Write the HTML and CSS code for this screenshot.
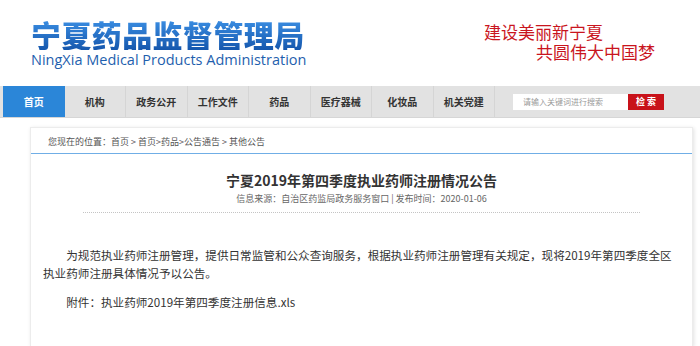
FILE: index.html
```html
<!DOCTYPE html>
<html lang="zh-CN">
<head>
  <meta charset="UTF-8">
  <title>宁夏药品监督管理局</title>
  <link rel="stylesheet" href="styles.css">
</head>
<body>
  <div class="header">
    <div class="logo">
      <div class="logo-cn">宁夏药品监督管理局</div>
      <div class="logo-en">NingXia Medical Products Administration</div>
    </div>
    <div class="slogan">
      <div>建设美丽新宁夏</div>
      <div class="slogan-2">共圆伟大中国梦</div>
    </div>
  </div>

  <div class="nav">
    <a class="nav-item active" href="#">首页</a>
    <a class="nav-item" href="#">机构</a>
    <a class="nav-item" href="#">政务公开</a>
    <a class="nav-item" href="#">工作文件</a>
    <a class="nav-item" href="#">药品</a>
    <a class="nav-item" href="#">医疗器械</a>
    <a class="nav-item" href="#">化妆品</a>
    <a class="nav-item" href="#">机关党建</a>
    <form class="search">
      <input type="text" placeholder="请输入关键词进行搜索">
      <button type="submit">检 索</button>
    </form>
  </div>

  <div class="card">
    <div class="crumb">您现在的位置：首页 &gt; 首页&gt;药品&gt;公告通告 &gt; 其他公告</div>
    <div class="article-head">
      <h1>宁夏2019年第四季度执业药师注册情况公告</h1>
      <div class="meta">信息来源：自治区药监局政务服务窗口&nbsp;|&nbsp;发布时间：2020-01-06</div>
    </div>
    <div class="article-body">
      <p>为规范执业药师注册管理，提供日常监管和公众查询服务，根据执业药师注册管理有关规定，现将2019年第四季度全区执业药师注册具体情况予以公告。</p>
      <p>附件：执业药师2019年第四季度注册信息.xls</p>
    </div>
  </div>
</body>
</html>
```

FILE: styles.css
```css
body { margin: 0; background: #fff; font-family: "Noto Sans CJK SC", sans-serif; color: #333; }

.header { display: flex; justify-content: space-between; height: 86px; padding: 0 45px 0 31px; }
.logo { padding-top: 19px; }
.logo-cn {
  font-size: 30px; font-weight: 900; line-height: 31px; letter-spacing: 0.4px;
  background: linear-gradient(#3b8fe4, #1557ad);
  -webkit-background-clip: text; background-clip: text; color: transparent;
}
.logo-en { margin-top: 1px; font-family: "Open Sans", sans-serif; font-size: 14.5px; line-height: 17px; color: #1f5fae; }
.slogan { padding-top: 22px; font-size: 17px; line-height: 20px; color: #c9151e; }
.slogan-2 { margin-left: 52px; }

.nav { display: flex; align-items: center; height: 32px; padding-left: 3px; background: #e2e2e2; border-bottom: 1px solid #d6d6d6; box-sizing: border-box; }
.nav-item {
  width: 61.5px; height: 100%; box-sizing: border-box; border-right: 1px solid #d5d5d5;
  display: flex; align-items: center; justify-content: center;
  font-size: 10px; font-weight: bold; color: #333; text-decoration: none;
}
.nav-item.active { background: #2b86d8; color: #fff; border-right: none; }
.search { display: flex; margin-left: 18px; }
.search input { width: 115px; height: 16px; box-sizing: border-box; border: none; padding: 0 10px; font-size: 8px; font-family: inherit; color: #999; background: #fff; outline: none; }
.search input::placeholder { color: #9a9a9a; }
.search button { width: 36px; height: 16px; border: none; padding: 0; background: #c8121a; color: #fff; font-size: 9px; font-weight: bold; font-family: inherit; }

.card { margin: 9px 7px 0 30px; border: 1px solid #ececec; border-bottom: none; box-shadow: 1px 1px 4px rgba(0, 0, 0, 0.12); min-height: 218px; }
.crumb { height: 25px; line-height: 27px; padding-left: 17px; font-size: 9px; color: #555; border-bottom: 1px solid #70aee6; }
.article-head { margin: 0 52px; padding-top: 16px; padding-bottom: 6px; border-bottom: 1px dotted #c4c4c4; text-align: center; }
.article-head h1 { margin: 0; font-size: 14px; line-height: 20px; font-weight: bold; color: #333; }
.meta { margin-top: 2px; font-size: 9px; line-height: 14px; color: #666; }
.article-body { padding: 33px 12px 0 12px; }
.article-body p { margin: 0 0 11px; font-size: 11.6px; line-height: 18px; text-indent: 2em; color: #333; }
```
